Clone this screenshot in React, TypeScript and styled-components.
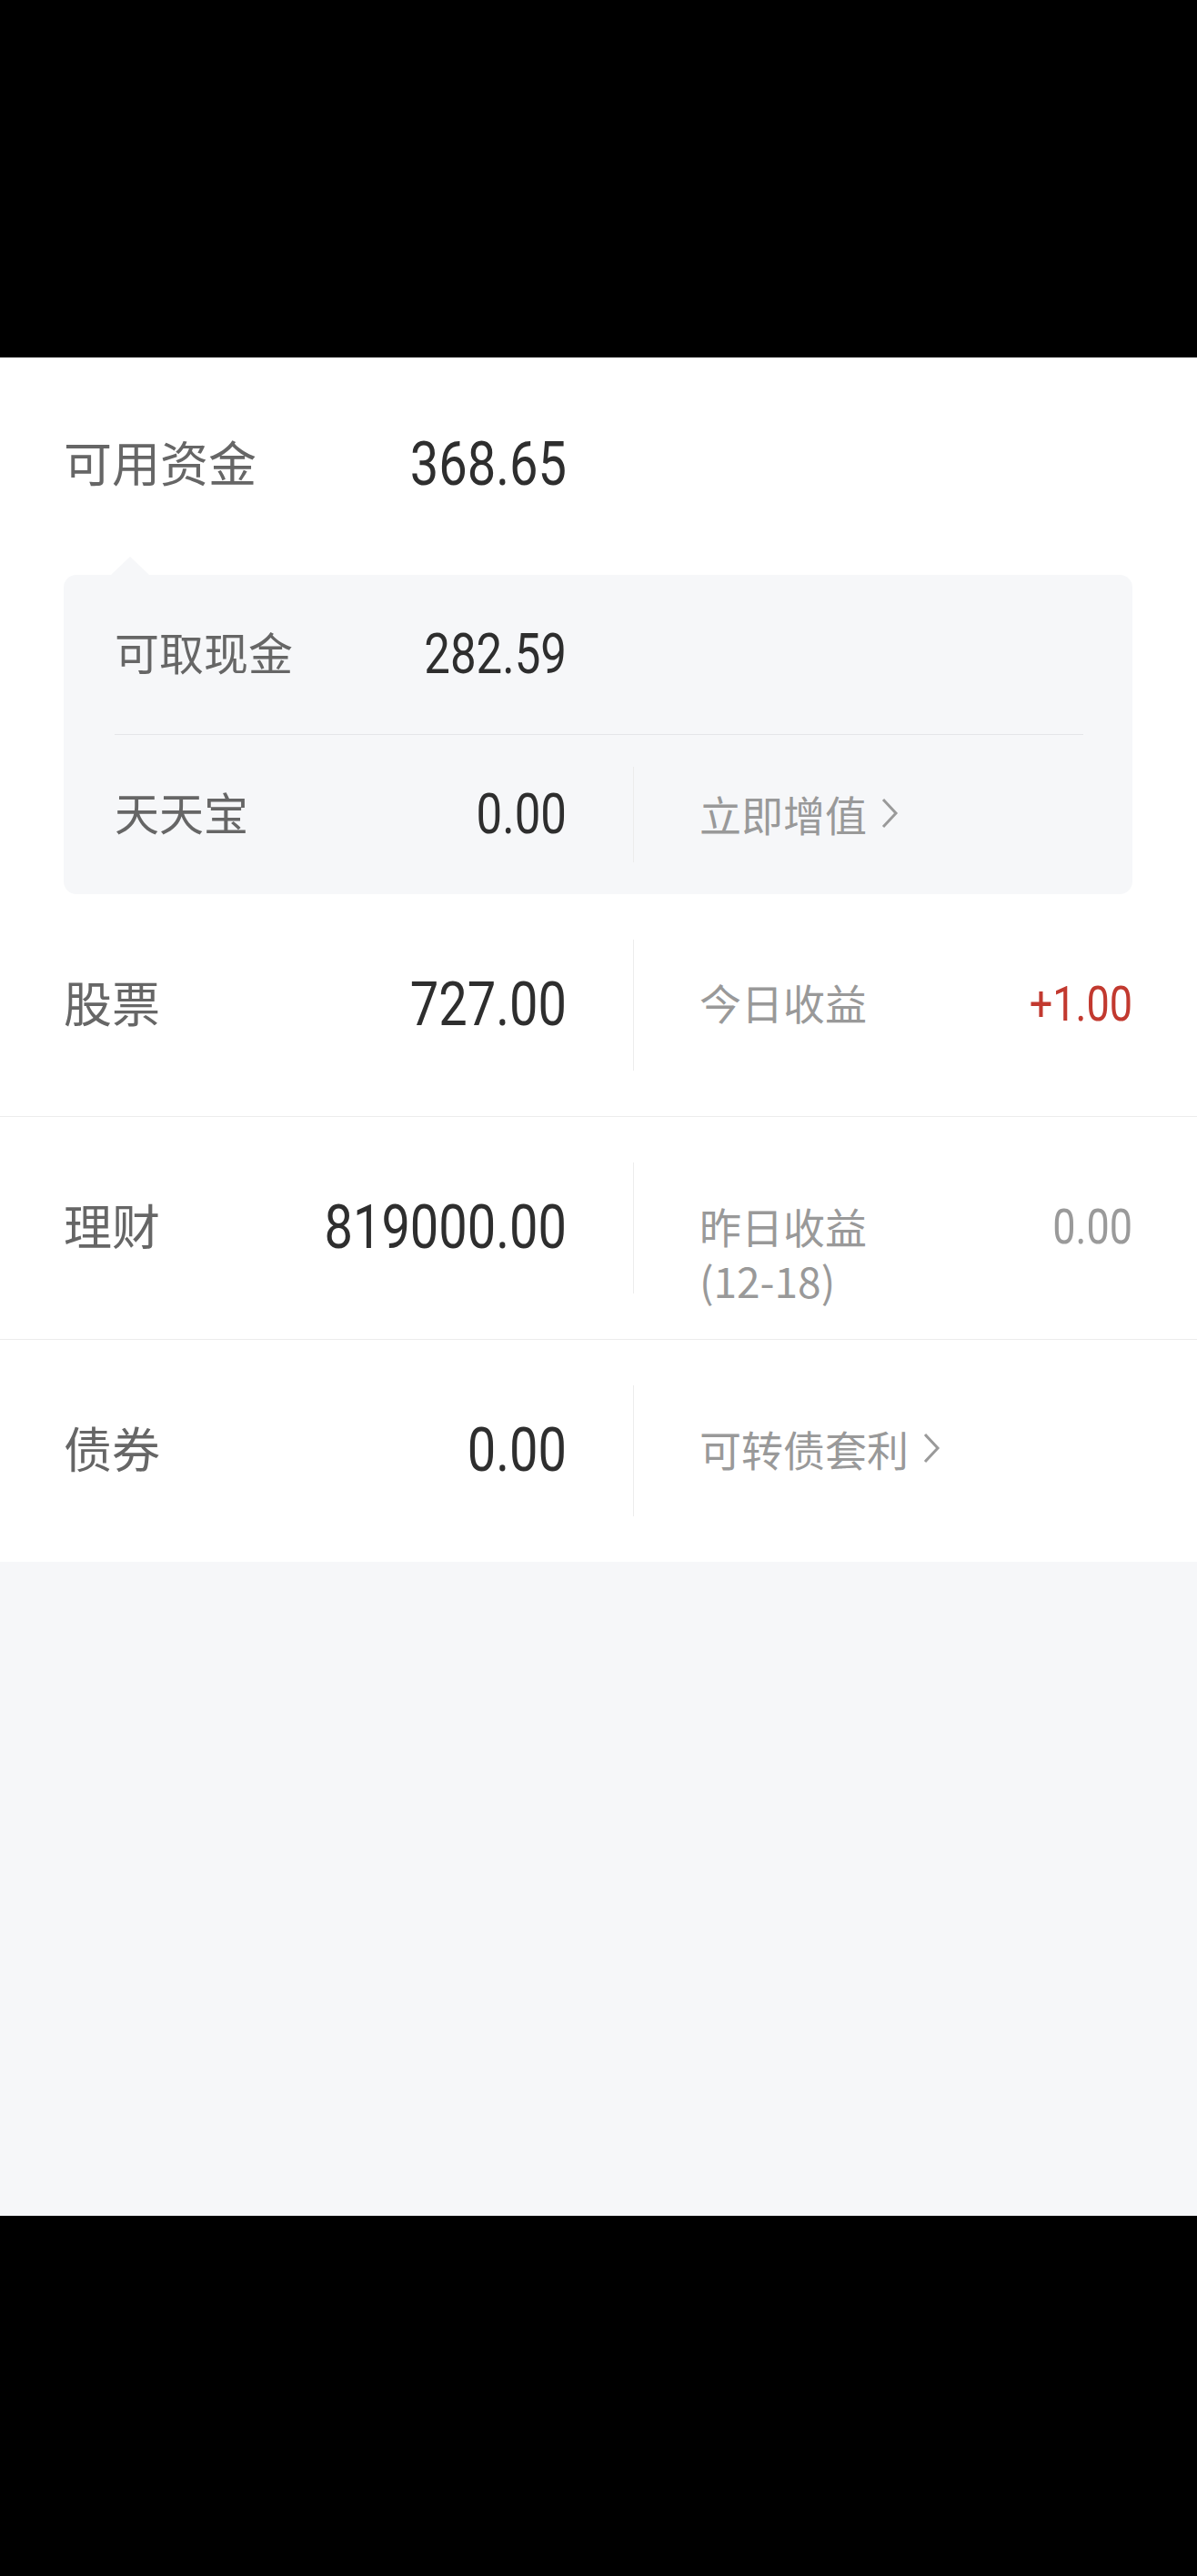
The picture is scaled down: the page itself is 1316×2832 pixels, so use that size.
import React from "react";
import styled, { createGlobalStyle } from "styled-components";

const GlobalStyle = createGlobalStyle`
  html, body { margin: 0; padding: 0; background: #000; }
  body {
    font-family: "Noto Sans CJK SC", "Noto Sans", sans-serif;
    -webkit-font-smoothing: antialiased;
  }
  *, *::before, *::after { box-sizing: border-box; }
`;

const Screen = styled.div`
  width: 1316px;
  display: flex;
  flex-direction: column;
`;

const BlackBar = styled.div<{ $h: number }>`
  height: ${(p) => p.$h}px;
  background: #000;
  flex: none;
`;

const Panel = styled.section`
  background: #fff;
  display: flex;
  flex-direction: column;
`;

const Filler = styled.div`
  height: 719px;
  background: #f6f7f9;
`;

const BalanceRow = styled.div`
  height: 239px;
  padding: 88px 71px 0 70px;
  display: flex;
  align-items: flex-start;
`;

const AssetRow = styled.div<{ $divided?: boolean }>`
  height: ${(p) => (p.$divided ? 245 : 244)}px;
  padding: 50px 71px 50px 70px;
  display: flex;
  align-items: flex-start;
  border-top: ${(p) => (p.$divided ? "1px solid #ececec" : "none")};
`;

const LeftCell = styled.div<{ $w: number; $offset?: number }>`
  width: ${(p) => p.$w}px;
  flex: none;
  display: flex;
  justify-content: space-between;
  align-items: flex-start;
  margin-top: ${(p) => p.$offset ?? 0}px;
`;

const RightCell = styled.div<{ $offset?: number }>`
  flex: 1;
  min-width: 0;
  display: flex;
  justify-content: space-between;
  align-items: flex-start;
  margin-top: ${(p) => p.$offset ?? 0}px;
`;

const Label = styled.span<{ $size: number; $muted?: boolean }>`
  font-size: ${(p) => p.$size}px;
  line-height: 60px;
  margin-top: -4px;
  color: ${(p) => (p.$muted ? "#999999" : "#666666")};
  white-space: nowrap;
`;

const TwoLineLabel = styled.span`
  display: flex;
  flex-direction: column;
  margin-top: -3px;
  font-size: 46px;
  line-height: 60px;
  color: #999999;
  white-space: nowrap;
`;

const Amount = styled.span<{ $size: number; $tone?: "dark" | "red" | "gray" }>`
  display: inline-block;
  font-family: "Roboto", "Noto Sans", sans-serif;
  font-size: ${(p) => p.$size}px;
  line-height: 60px;
  transform: scaleY(1.18);
  transform-origin: 50% 52%;
  color: ${(p) =>
    p.$tone === "red" ? "#c2392f" : p.$tone === "gray" ? "#9a9a9a" : "#2e2e2e"};
  white-space: nowrap;
`;

const VDivider = styled.div<{ $h?: number }>`
  width: 1px;
  flex: none;
  margin: 0 72px 0 73px;
  background: #ececec;
  align-self: ${(p) => (p.$h ? "center" : "stretch")};
  height: ${(p) => (p.$h ? `${p.$h}px` : "auto")};
`;

const Card = styled.div`
  position: relative;
  margin: 0 71px 0 70px;
  padding: 0 54px 0 56px;
  background: #f6f7f9;
  border-radius: 14px;

  &::before {
    content: "";
    position: absolute;
    left: 52px;
    top: -20px;
    border-left: 21px solid transparent;
    border-right: 21px solid transparent;
    border-bottom: 20px solid #f6f7f9;
  }
`;

const CardRow = styled.div<{ $divided?: boolean }>`
  height: ${(p) => (p.$divided ? 176 : 175)}px;
  display: flex;
  align-items: center;
  border-top: ${(p) => (p.$divided ? "1px solid #e4e6e9" : "none")};
`;

const LinkText = styled.span`
  display: inline-flex;
  align-items: center;
  gap: 15px;
  margin-top: -3px;
  font-size: 46px;
  line-height: 60px;
  color: #999999;
  white-space: nowrap;
  cursor: pointer;
`;

const Chevron = () => (
  <svg width="20" height="34" viewBox="0 0 20 34" fill="none" aria-hidden="true">
    <polyline
      points="3,2 17,17 3,32"
      stroke="#9a9a9a"
      strokeWidth="3"
      strokeLinecap="butt"
      strokeLinejoin="miter"
    />
  </svg>
);

export default function App() {
  return (
    <>
      <GlobalStyle />
      <Screen>
        <BlackBar $h={393} />
        <Panel>
          <BalanceRow>
            <LeftCell $w={553}>
              <Label $size={53}>可用资金</Label>
              <Amount $size={56}>368.65</Amount>
            </LeftCell>
          </BalanceRow>

          <Card>
            <CardRow>
              <LeftCell $w={497}>
                <Label $size={49}>可取现金</Label>
                <Amount $size={51}>282.59</Amount>
              </LeftCell>
            </CardRow>
            <CardRow $divided>
              <LeftCell $w={497}>
                <Label $size={49}>天天宝</Label>
                <Amount $size={51}>0.00</Amount>
              </LeftCell>
              <VDivider $h={105} />
              <RightCell>
                <LinkText>
                  立即增值
                  <Chevron />
                </LinkText>
              </RightCell>
            </CardRow>
          </Card>

          <AssetRow>
            <LeftCell $w={553} $offset={42}>
              <Label $size={53}>股票</Label>
              <Amount $size={56}>727.00</Amount>
            </LeftCell>
            <VDivider />
            <RightCell $offset={42}>
              <Label $size={46} $muted>
                今日收益
              </Label>
              <Amount $size={45} $tone="red">
                +1.00
              </Amount>
            </RightCell>
          </AssetRow>

          <AssetRow $divided>
            <LeftCell $w={553} $offset={42}>
              <Label $size={53}>理财</Label>
              <Amount $size={56}>819000.00</Amount>
            </LeftCell>
            <VDivider />
            <RightCell $offset={42}>
              <TwoLineLabel>
                <span>昨日收益</span>
                <span>(12-18)</span>
              </TwoLineLabel>
              <Amount $size={45} $tone="gray">
                0.00
              </Amount>
            </RightCell>
          </AssetRow>

          <AssetRow $divided>
            <LeftCell $w={553} $offset={42}>
              <Label $size={53}>债券</Label>
              <Amount $size={56}>0.00</Amount>
            </LeftCell>
            <VDivider />
            <RightCell $offset={42}>
              <LinkText>
                可转债套利
                <Chevron />
              </LinkText>
            </RightCell>
          </AssetRow>
        </Panel>
        <Filler />
        <BlackBar $h={395} />
      </Screen>
    </>
  );
}
